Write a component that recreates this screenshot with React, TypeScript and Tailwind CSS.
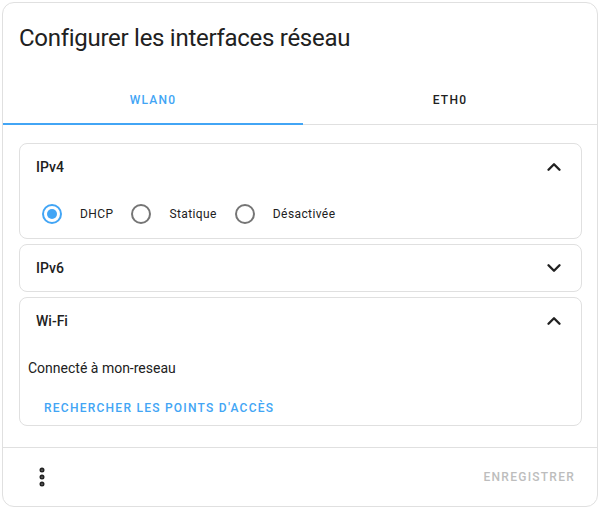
import { ChevronDown, ChevronUp, MoreVertical } from "lucide-react";

const BLUE = "text-[#42a5f5]";

function Radio({ checked, label }: { checked?: boolean; label: string }) {
  return (
    <label className="flex items-center">
      <span className="flex h-10 w-10 items-center justify-center">
        <span
          className={`flex h-5 w-5 items-center justify-center rounded-full border-2 ${
            checked ? "border-[#42a5f5]" : "border-[#757575]"
          }`}
        >
          {checked && <span className="h-2.5 w-2.5 rounded-full bg-[#42a5f5]" />}
        </span>
      </span>
      <span className="ml-2 mr-2 text-[12px] tracking-[0.4px] text-[#212121]">
        {label}
      </span>
    </label>
  );
}

function Panel({
  title,
  open,
  children,
}: {
  title: string;
  open?: boolean;
  children?: React.ReactNode;
}) {
  return (
    <div className="rounded-lg border border-[#e0e0e0]">
      <div className="flex h-[46px] items-center justify-between px-4">
        <span className="text-[14px] font-medium text-[#212121]">{title}</span>
        {open ? (
          <ChevronUp size={22} strokeWidth={2.6} className="text-[#212121]" />
        ) : (
          <ChevronDown size={22} strokeWidth={2.6} className="text-[#212121]" />
        )}
      </div>
      {children}
    </div>
  );
}

export default function App() {
  return (
    <div className="h-[509px] w-[600px] bg-white p-[2px] font-['Roboto',sans-serif]">
      <div className="flex h-[505px] flex-col rounded-xl border border-[#e0e0e0] bg-white">
        {/* titre */}
        <div className="px-[16px] pb-[22px] pt-[19px]">
          <h1 className="text-[24px] leading-8 tracking-[-0.28px] text-[#212121]">
            Configurer les interfaces réseau
          </h1>
        </div>

        {/* onglets */}
        <div className="flex h-[49px] border-b border-[#e0e0e0]">
          <div className="relative flex w-[300px] items-center justify-center">
            <span className={`text-[12px] font-medium tracking-[1.25px] ${BLUE}`}>
              WLAN0
            </span>
            <span className="absolute bottom-[-1px] left-0 right-0 h-[2px] bg-[#42a5f5]" />
          </div>
          <div className="flex flex-1 items-center justify-center">
            <span className="text-[12px] font-medium tracking-[1.25px] text-[#212121]">
              ETH0
            </span>
          </div>
        </div>

        {/* contenu */}
        <div className="flex flex-1 flex-col gap-[5px] pl-[16px] pr-[15px] pt-[18px]">
          <Panel title="IPv4" open>
            <div className="flex h-[48px] items-center pl-3">
              <Radio checked label="DHCP" />
              <Radio label="Statique" />
              <Radio label="Désactivée" />
            </div>
          </Panel>
          <Panel title="IPv6" />
          <Panel title="Wi-Fi" open>
            <div className="px-2 pb-px">
              <div className="pt-[14px] text-[14px] leading-5 text-[#212121]">
                Connecté à mon-reseau
              </div>
              <div className="mt-[14px] flex h-8 items-center px-4">
                <span className={`text-[12px] font-medium tracking-[1.25px] ${BLUE}`}>
                  RECHERCHER LES POINTS D'ACCÈS
                </span>
              </div>
            </div>
          </Panel>
        </div>

        {/* pied */}
        <div className="flex h-[59px] items-center justify-between border-t border-[#e0e0e0] pl-[27px] pr-[22px]">
          <MoreVertical size={24} strokeWidth={3} className="text-[#212121]" />
          <span className="text-[12px] font-medium tracking-[1.25px] text-[#bdbdbd]">
            ENREGISTRER
          </span>
        </div>
      </div>
    </div>
  );
}
